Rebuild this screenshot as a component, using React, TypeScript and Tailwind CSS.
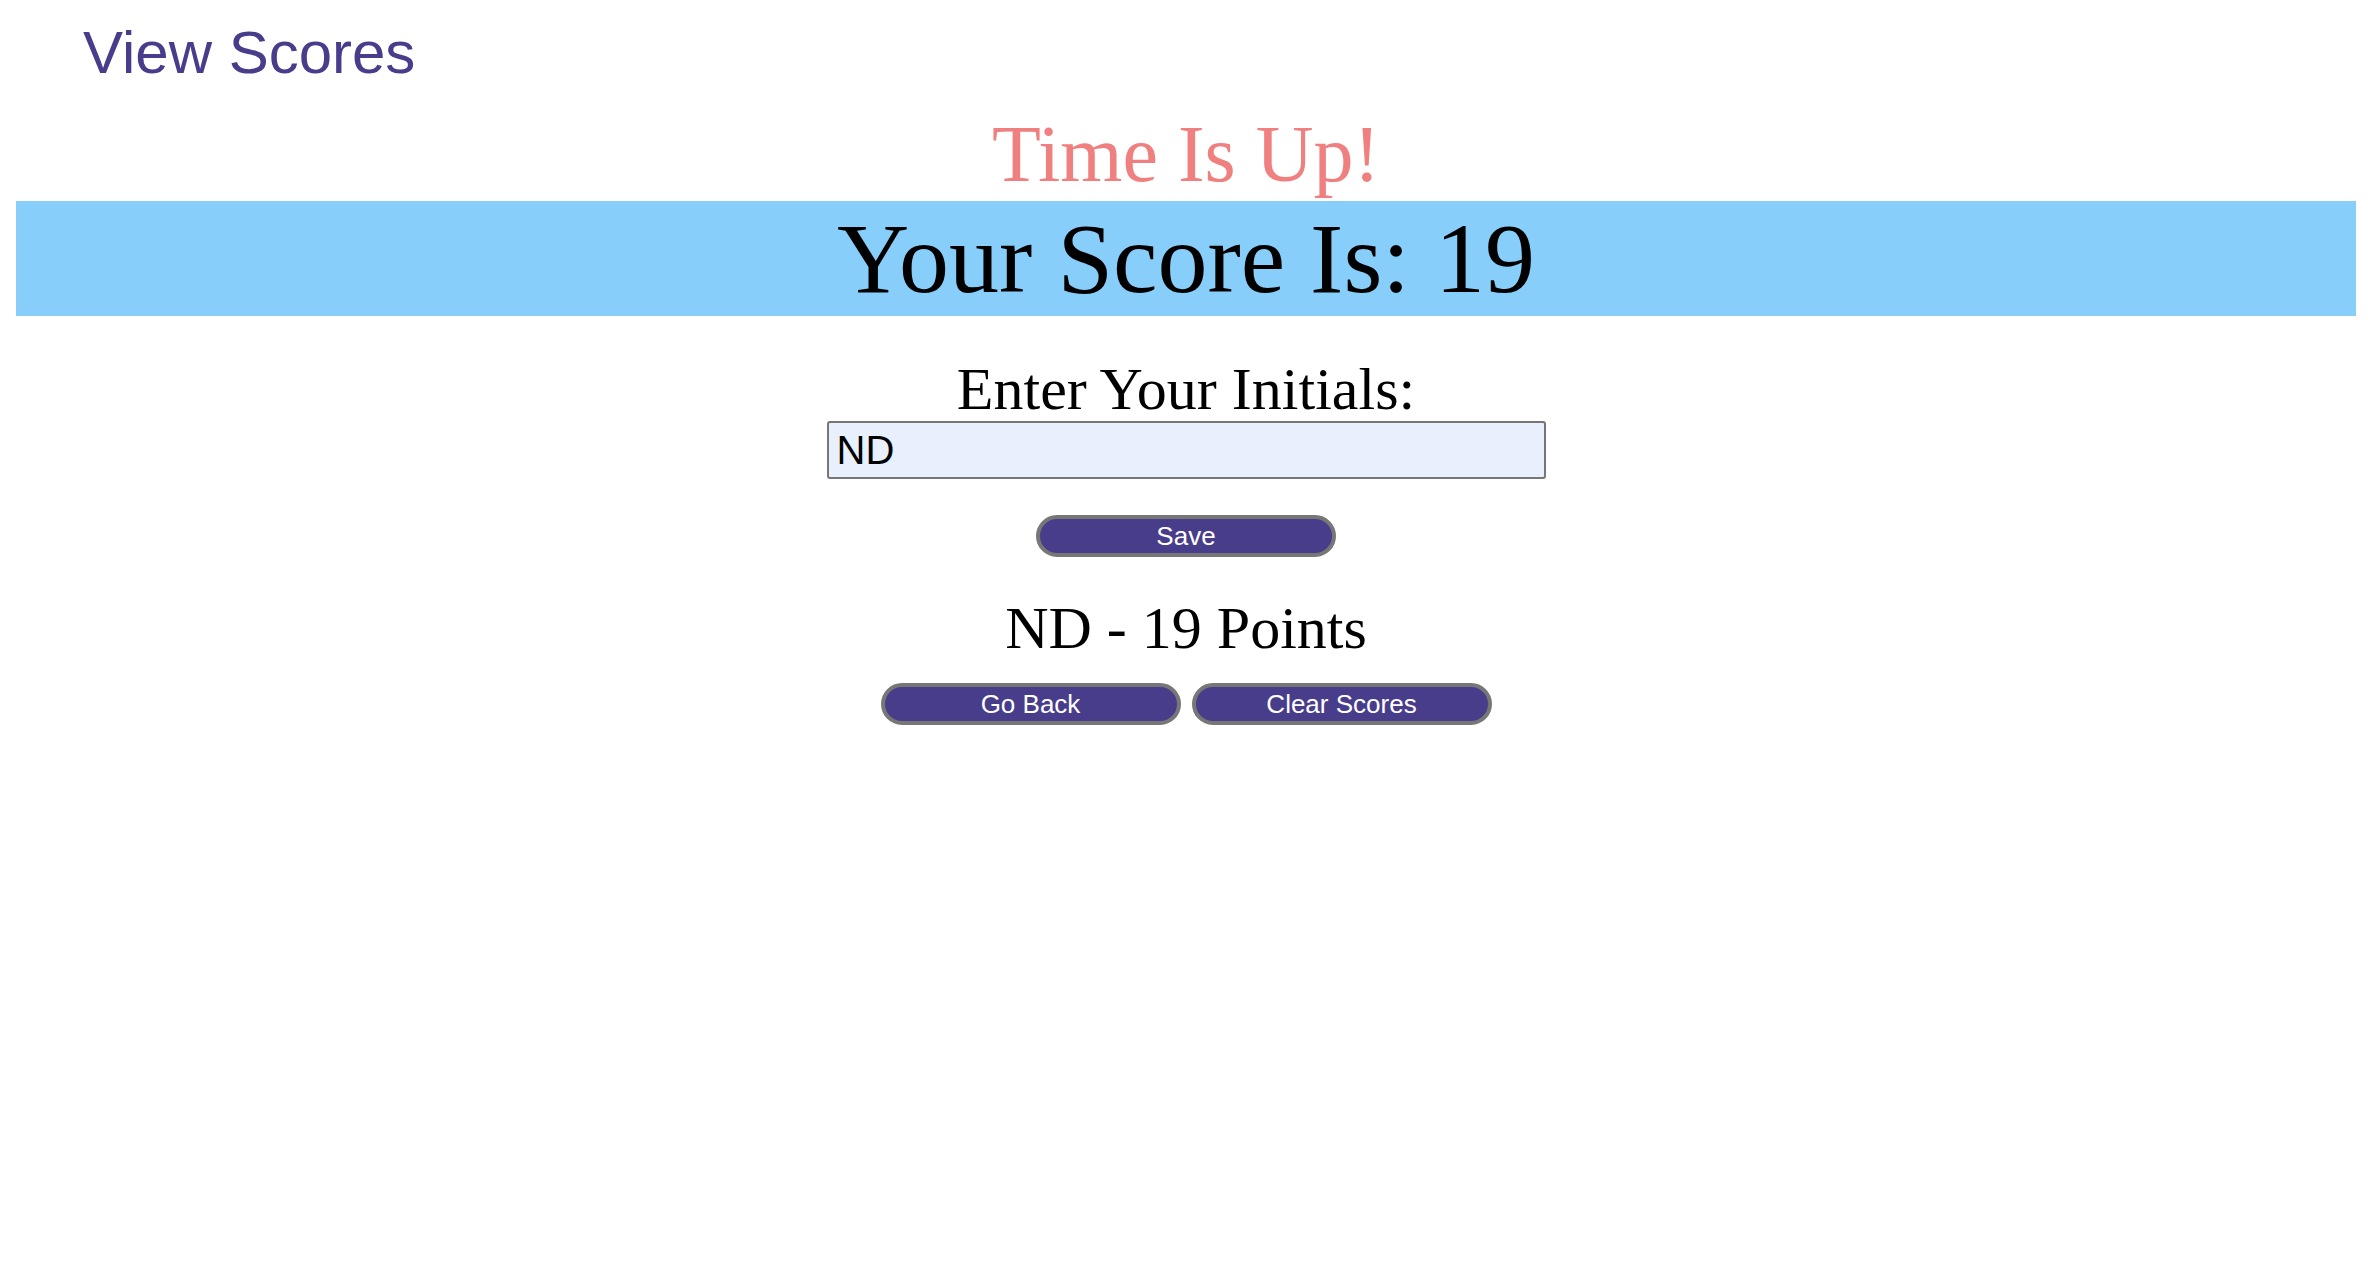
import { useState } from "react";

const serif = "font-['Liberation_Serif',_'Times_New_Roman',_serif]";
const sans = "font-['Liberation_Sans',_Arial,_sans-serif]";

const buttonClass =
  "h-[42px] w-[300px] rounded-full border-4 border-[#777777] bg-[#483D8B] text-[26px] leading-none text-white " +
  sans;

export default function App() {
  const [initials, setInitials] = useState("ND");
  const [scores, setScores] = useState([{ name: "ND", points: 19 }]);
  const score = 19;

  return (
    <main className="min-h-screen bg-white text-black">
      <header className="pl-[83px] pt-[18px]">
        <a className={`text-[60px] leading-[69px] text-[#483D8B] ${sans}`} href="#">
          View Scores
        </a>
      </header>

      <h2 className={`mt-[21px] text-center text-[80px] leading-[92px] text-[#F08080] ${serif}`}>
        Time Is Up!
      </h2>

      <h1
        className={`mx-4 mt-px h-[115px] bg-[#87CEFA] text-center text-[100px] leading-[115px] ${serif}`}
      >
        Your Score Is: {score}
      </h1>

      <section className="mt-[43px] flex flex-col items-center">
        <label className={`text-[60px] leading-[60px] ${serif}`} htmlFor="initials">
          Enter Your Initials:
        </label>
        <input
          id="initials"
          value={initials}
          onChange={(event) => setInitials(event.target.value)}
          className={`mt-[2px] h-[58px] w-[719px] rounded-[3px] border-2 border-[#767676] bg-[#E8F0FE] px-2 text-[40px] text-black outline-none ${sans}`}
          type="text"
        />

        <button
          onClick={() => setScores([...scores, { name: initials, points: score }])}
          className={`mt-[36px] ${buttonClass}`}
          type="button"
        >
          Save
        </button>

        <div className="mt-[38px] flex flex-col items-center">
          {scores.map((entry, index) => (
            <p key={index} className={`text-[60px] leading-[66px] ${serif}`}>
              {entry.name} - {entry.points} Points
            </p>
          ))}
        </div>

        <div className="mt-[22px] flex gap-[11px]">
          <button className={buttonClass} type="button">
            Go Back
          </button>
          <button onClick={() => setScores([])} className={buttonClass} type="button">
            Clear Scores
          </button>
        </div>
      </section>
    </main>
  );
}
